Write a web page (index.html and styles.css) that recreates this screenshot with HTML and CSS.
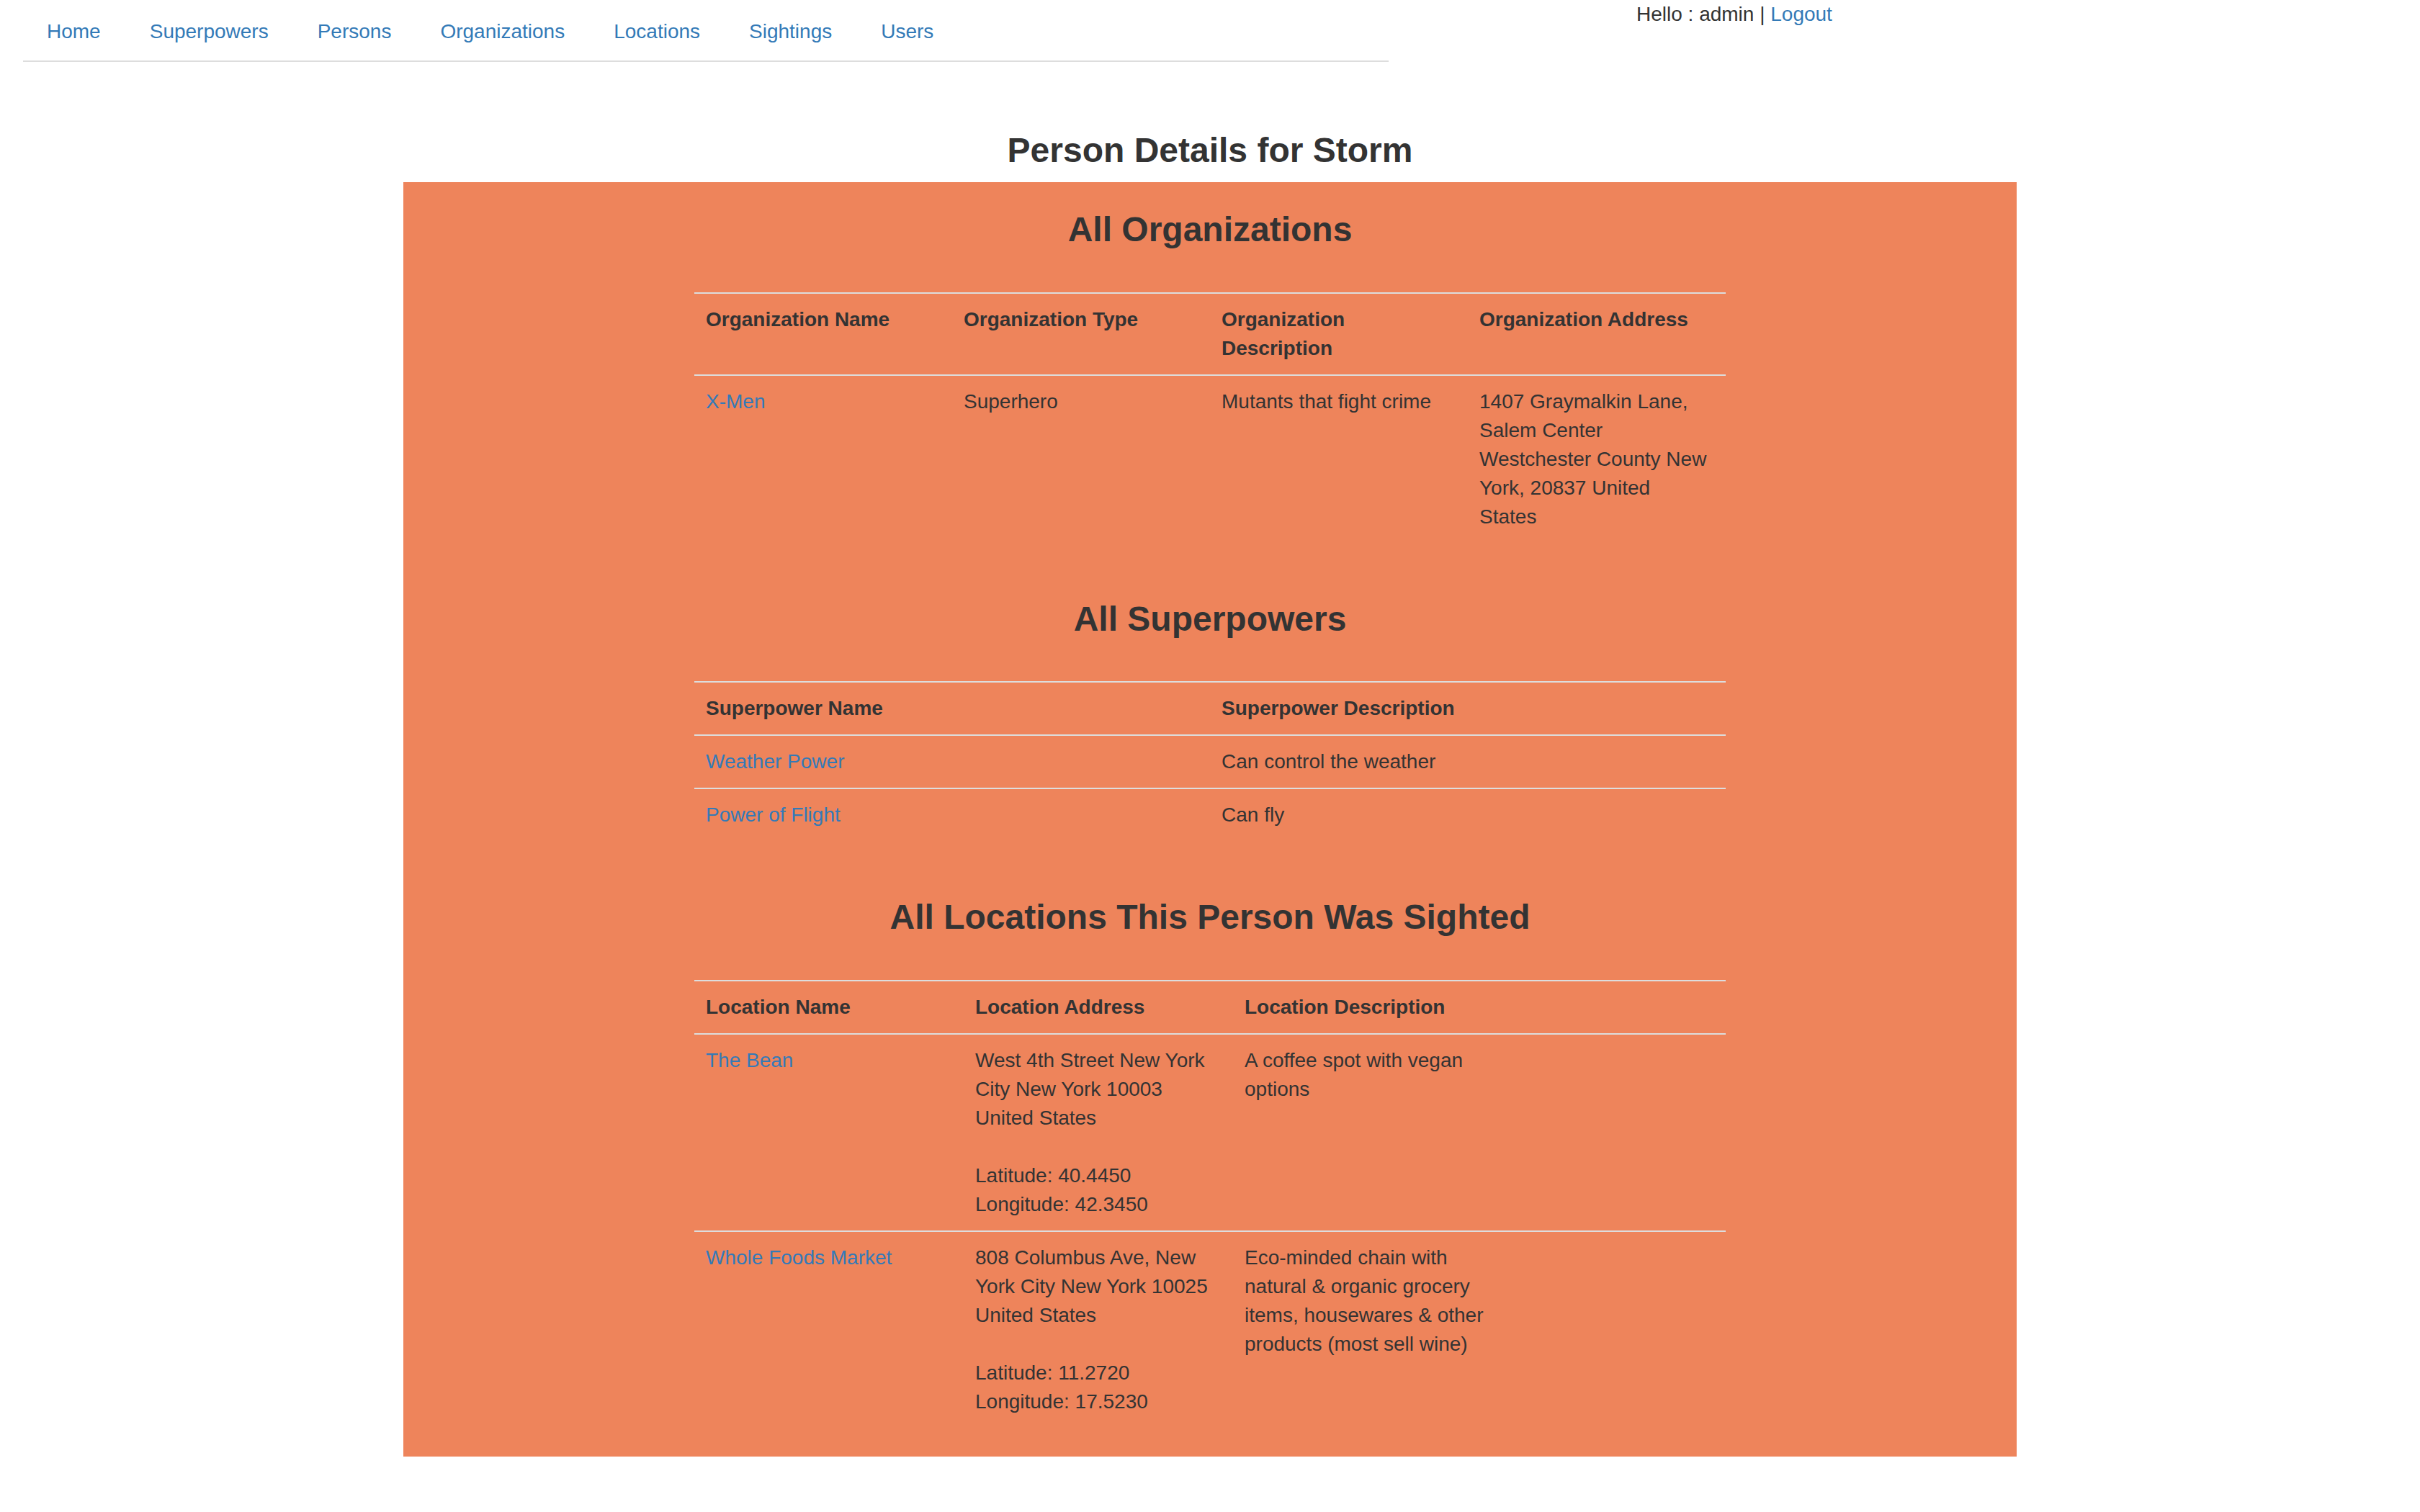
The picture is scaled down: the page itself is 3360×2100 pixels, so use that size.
FILE: index.html
```html
<!DOCTYPE html>
<html lang="en">
<head>
<meta charset="utf-8">
<title>Person Details for Storm</title>
<link rel="stylesheet" href="styles.css">
</head>
<body>
<header class="topbar">
  <nav class="mainnav">
    <ul class="navlinks">
      <li><a href="#">Home</a></li>
      <li><a href="#">Superpowers</a></li>
      <li><a href="#">Persons</a></li>
      <li><a href="#">Organizations</a></li>
      <li><a href="#">Locations</a></li>
      <li><a href="#">Sightings</a></li>
      <li><a href="#">Users</a></li>
    </ul>
  </nav>
  <div class="userbox">Hello : admin | <a href="#">Logout</a></div>
</header>

<h1 class="page-title">Person Details for Storm</h1>

<main class="panel">
  <section class="block">
    <h2 class="block-title">All Organizations</h2>
    <table class="data">
      <colgroup>
        <col class="q"><col class="q"><col class="q"><col class="q">
      </colgroup>
      <tr>
        <th>Organization Name</th>
        <th>Organization Type</th>
        <th>Organization<br>Description</th>
        <th>Organization Address</th>
      </tr>
      <tr>
        <td><a href="#">X-Men</a></td>
        <td>Superhero</td>
        <td>Mutants that fight crime</td>
        <td>1407 Graymalkin Lane,<br>Salem Center<br>Westchester County New<br>York, 20837 United<br>States</td>
      </tr>
    </table>
  </section>

  <section class="block">
    <h2 class="block-title">All Superpowers</h2>
    <table class="data">
      <colgroup>
        <col class="h"><col class="h">
      </colgroup>
      <tr>
        <th>Superpower Name</th>
        <th>Superpower Description</th>
      </tr>
      <tr>
        <td><a href="#">Weather Power</a></td>
        <td>Can control the weather</td>
      </tr>
      <tr>
        <td><a href="#">Power of Flight</a></td>
        <td>Can fly</td>
      </tr>
    </table>
  </section>

  <section class="block">
    <h2 class="block-title">All Locations This Person Was Sighted</h2>
    <table class="data">
      <colgroup>
        <col class="l1"><col class="l2"><col class="l3"><col class="l4">
      </colgroup>
      <tr>
        <th>Location Name</th>
        <th>Location Address</th>
        <th>Location Description</th>
        <th></th>
      </tr>
      <tr>
        <td><a href="#">The Bean</a></td>
        <td>West 4th Street New York<br>City New York 10003<br>United States<br><br>Latitude: 40.4450<br>Longitude: 42.3450</td>
        <td>A coffee spot with vegan<br>options</td>
        <td></td>
      </tr>
      <tr>
        <td><a href="#">Whole Foods Market</a></td>
        <td>808 Columbus Ave, New<br>York City New York 10025<br>United States<br><br>Latitude: 11.2720<br>Longitude: 17.5230</td>
        <td>Eco-minded chain with<br>natural &amp; organic grocery<br>items, housewares &amp; other<br>products (most sell wine)</td>
        <td></td>
      </tr>
    </table>
  </section>
</main>
</body>
</html>
```

FILE: styles.css
```css
html, body {
  background: #ffffff;
}

body {
  margin: 0;
  font-family: "Liberation Sans", Arial, Helvetica, sans-serif;
  font-size: 28px;
  line-height: 40px;
  color: #333333;
}

a {
  color: #337ab7;
  text-decoration: none;
}

/* ---------- top bar ---------- */
.topbar {
  display: flex;
  align-items: flex-start;
}

.mainnav {
  margin-left: 32px;
  width: 1896px;
  padding-top: 4px;
  border-bottom: 2px solid #dddddd;
}

.navlinks {
  list-style: none;
  margin: 0;
  padding: 0 0 0 3px;
  display: flex;
  gap: 8px;
}

.navlinks a {
  display: block;
  padding: 20px 30px;
}

.userbox {
  margin-left: 344px;
  white-space: nowrap;
}

/* ---------- title ---------- */
.page-title {
  margin: 97px 0 17px;
  font-size: 48px;
  line-height: 52.8px;
  font-weight: 700;
  text-align: center;
  color: #333333;
}

/* ---------- orange panel ---------- */
.panel {
  display: flow-root;
  width: 2240px;
  margin: 0 auto;
  background: #ee845b;
}

.block {
  display: flow-root;
}

.block-title {
  margin: 40px 0 60px;
  font-size: 48px;
  line-height: 52.8px;
  font-weight: 700;
  text-align: center;
  color: #333333;
}

.data {
  width: 1432px;
  margin: 0 auto 40px;
  border-collapse: collapse;
  table-layout: fixed;
}

.data th,
.data td {
  padding: 16px;
  border-top: 2px solid #dddddd;
  vertical-align: top;
  text-align: left;
}

.data th {
  font-weight: 700;
}

.data col.q { width: 25%; }
.data col.h { width: 50%; }
.data col.l1 { width: 374px; }
.data col.l2 { width: 374px; }
.data col.l3 { width: 374px; }
.data col.l4 { width: 310px; }
```
